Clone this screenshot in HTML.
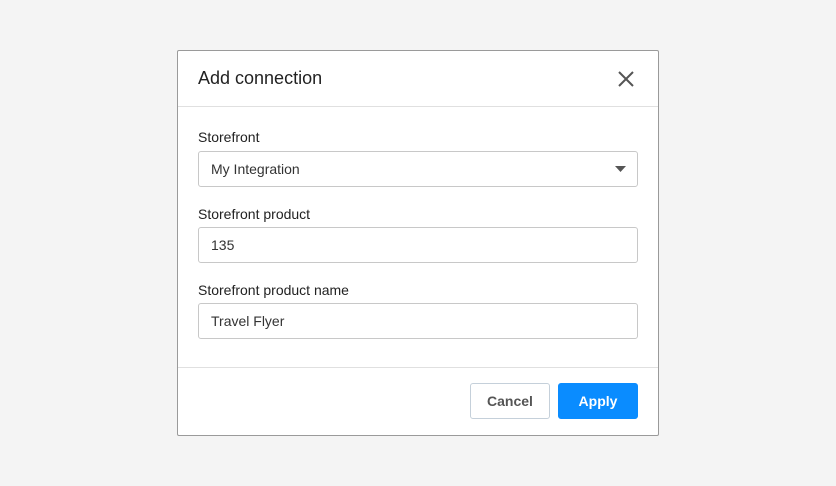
<!DOCTYPE html><html><head><style>
body{margin:0;width:836px;height:486px;background:#f4f4f4;font-family:"Liberation Sans",sans-serif;position:relative;overflow:hidden}
.d{position:absolute;left:177px;top:50px;width:480px;height:384px;background:#fff;border:1px solid #9a9a9a;border-radius:2px}
.h{position:absolute;left:20px;top:17px;font-size:18px;color:#222}
.x{position:absolute;left:439px;top:19px}
.l1{position:absolute;left:0;right:0;top:55px;border-top:1px solid #e0e0e0}
.l2{position:absolute;left:0;right:0;top:316px;border-top:1px solid #e0e0e0}
.lb{position:absolute;left:20px;font-size:14px;color:#222}
.in{position:absolute;left:20px;border:1px solid #c8c8c8;border-radius:3px;box-sizing:border-box;width:440px;height:36px;font-size:14px;color:#333;padding:9px 12px}
.b{position:absolute;top:332px;height:36px;width:80px;box-sizing:border-box;border-radius:3px;font-size:14px;font-weight:bold;text-align:center;line-height:34px}
</style></head><body>
<div class="d">
<div class="h">Add connection</div>
<svg class="x" width="18" height="18" viewBox="0 0 18 18"><path d="M2 2L16 16M16 2L2 16" stroke="#555" stroke-width="2"/></svg>
<div class="l1"></div>
<div class="lb" style="top:78px">Storefront</div>
<div class="in" style="top:100px">My Integration<svg style="position:absolute;right:10px;top:14px" width="12" height="7"><path d="M0 0H11L5.5 6Z" fill="#555"/></svg></div>
<div class="lb" style="top:155px">Storefront product</div>
<div class="in" style="top:176px">135</div>
<div class="lb" style="top:231px">Storefront product name</div>
<div class="in" style="top:252px">Travel Flyer</div>
<div class="l2"></div>
<div class="b" style="left:292px;border:1px solid #c5d0da;color:#555">Cancel</div>
<div class="b" style="left:380px;background:#0a8cff;color:#fff;border:1px solid #0a8cff">Apply</div>
</div>
</body></html>
